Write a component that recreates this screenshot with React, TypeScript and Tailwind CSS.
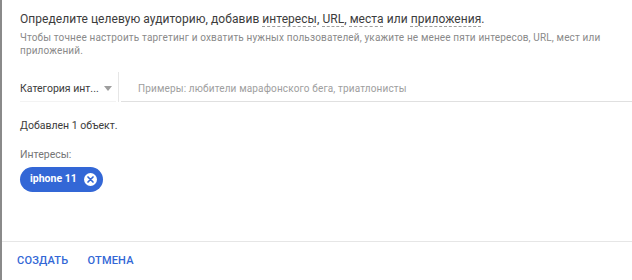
function Word({ children }: { children: React.ReactNode }) {
  return (
    <span className="underline decoration-dashed decoration-[#9e9e9e] underline-offset-[3px] decoration-1">
      {children}
    </span>
  );
}

function App() {
  return (
    <div className="w-[632px] h-[280px] bg-white border-l-2 border-[#8a8a8a] flex flex-col font-['Roboto',sans-serif] overflow-hidden">
      <div className="flex-1 pl-[18px] pr-4 pt-[11px]">
        <h1 className="text-[12px] leading-[17px] text-[#3c3c3c] tracking-[0.05px]">
          Определите целевую аудиторию, добавив <Word>интересы</Word>, <Word>URL</Word>, <Word>места</Word> или{" "}
          <Word>приложения</Word>.
        </h1>
        <p className="mt-[3px] text-[10px] leading-[13px] text-[#8a8a8a] tracking-[0.15px]">
          Чтобы точнее настроить таргетинг и охватить нужных пользователей, укажите не менее пяти интересов, URL, мест или
          приложений.
        </p>

        <div className="mt-[19px] flex items-stretch h-[26px] -mr-4">
          <div className="w-[96px] flex items-center justify-between border-b border-[#f3f3f3] pr-1 whitespace-nowrap">
            <span className="text-[10.5px] text-[#3c3c3c]">Категория инт...</span>
            <svg width="8" height="5" viewBox="0 0 8 5" className="ml-1">
              <path d="M0 0h8L4 5z" fill="#9e9e9e" />
            </svg>
          </div>
          <div className="w-px bg-[#e6e6e6] mx-[2px] -mt-[4px]" />
          <div className="flex-1 flex items-center border-b border-[#e0e0e0] pl-[17px]">
            <span className="text-[10px] text-[#9e9e9e] tracking-[0.15px]">Примеры: любители марафонского бега, триатлонисты</span>
          </div>
        </div>

        <div className="mt-[16px] text-[10.5px] text-[#3c3c3c]">Добавлен 1 объект.</div>
        <div className="mt-[13px] text-[10.5px] text-[#757575]">Интересы:</div>
        <div className="mt-[4px] inline-flex items-center h-[25px] rounded-full bg-[#3367d6] pl-[10px] pr-[6px] gap-[7px]">
          <span className="text-[10.5px] font-bold text-white">iphone 11</span>
          <svg width="13" height="13" viewBox="0 0 14 14">
            <circle cx="7" cy="7" r="7" fill="#fff" />
            <path d="M4.3 4.3l5.4 5.4M9.7 4.3l-5.4 5.4" stroke="#3367d6" strokeWidth="1.8" strokeLinecap="round" />
          </svg>
        </div>
      </div>

      <div className="h-[39px] border-t border-[#e6e6e6] flex items-center pl-[15px] gap-[19px] shrink-0">
        <button className="text-[11px] font-medium text-[#3367d6] tracking-[0.2px]">СОЗДАТЬ</button>
        <button className="text-[11px] font-medium text-[#3367d6] tracking-[0.2px]">ОТМЕНА</button>
      </div>
    </div>
  );
}

export default App;
